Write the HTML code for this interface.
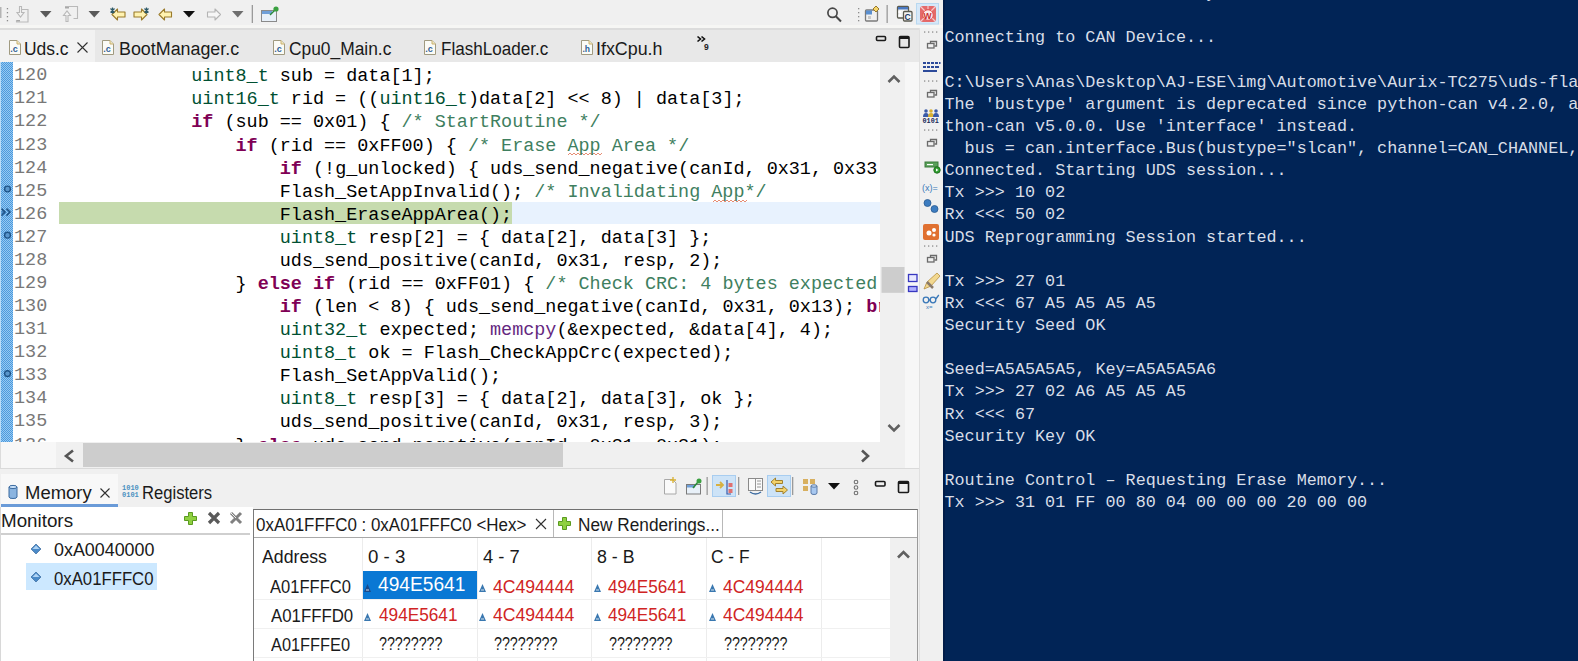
<!DOCTYPE html>
<html><head><meta charset="utf-8">
<style>
*{margin:0;padding:0;box-sizing:border-box}
html,body{width:1578px;height:661px;overflow:hidden;background:#f0f0f0;font-family:"Liberation Sans",sans-serif}
.a{position:absolute}
#toolbar{left:0;top:0;width:943px;height:28px;background:#f0f0f0}
#edtabs{left:0;top:28px;width:919px;height:34px;background:#e8e8e8}
.tab{position:absolute;top:0;height:34px;font-size:18px;color:#1e1e1e;white-space:nowrap}
.tab span{position:absolute;top:8px}
#editor{left:0;top:62px;width:881px;height:380px;background:#fff;overflow:hidden}
#ruler{left:0;top:62px;width:13px;height:380px;background-color:#4a9ade;background-image:conic-gradient(#98c8f0 25%,transparent 0 50%,#98c8f0 0 75%,transparent 0);background-size:2px 2px}
.code{position:absolute;left:58.5px;font-family:"Liberation Mono",monospace;font-size:18.46px;white-space:pre;color:#000;line-height:23.08px}
.ln{position:absolute;left:14px;font-family:"Liberation Mono",monospace;font-size:18.46px;white-space:pre;color:#787878;line-height:23.08px}
i{font-style:normal}
.k{color:#7f0055;font-weight:bold}
.t{color:#005032}
.c{color:#3f7f5f}
.f{color:#642880}
#vscroll{left:881px;top:62px;width:24px;height:380px;background:#f0f0f0}
#overview{left:905px;top:62px;width:14px;height:406px;background:#f7f7f7}
#hscroll{left:0;top:442px;width:905px;height:26px;background:#f0f0f0}
#trim{left:919px;top:28px;width:24px;height:633px;background:#f0f0f0}
#term{left:943px;top:0;width:635px;height:661px;background:#012456;overflow:hidden}
.tl{position:absolute;left:1.5px;font-family:"Liberation Mono",monospace;font-size:16.78px;white-space:pre;color:#d8dee8;line-height:22.13px}
#memtabs{left:0;top:473px;width:919px;height:34px;background:#f0f0f0}
#monitors{left:0;top:507px;width:253px;height:154px;background:#fff}
#rend{left:253px;top:507px;width:666px;height:154px;background:#f0f0f0}
.ui{font-size:18px;color:#1e1e1e;white-space:nowrap}
.u{position:absolute;font-family:"Liberation Sans",sans-serif;line-height:1;white-space:pre;transform-origin:0 0}
</style></head><body>
<div id="toolbar" class="a"></div>
<svg class="a" style="left:0;top:0" width="943" height="28" viewBox="0 0 943 28">
<rect x="0" y="7" width="1.5" height="11" fill="#b4b4b4"/>
<g fill="#8c8c8c"><rect x="6.8" y="8" width="1.3" height="1.3"/><rect x="6.8" y="12" width="1.3" height="1.3"/><rect x="6.8" y="16" width="1.3" height="1.3"/><rect x="6.8" y="20" width="1.3" height="1.3"/></g>
<g fill="none" stroke="#b9b9b9" stroke-width="1.1">
 <path d="M21.5 9.5h6.5v12.5h-11.5v-2"/><path d="M19.5 6.5h2v6h2.5l-3.5 4.5-3.5-4.5h2.5z" fill="#f4f4f4"/>
 <rect x="17" y="20" width="3" height="1.5" fill="#a8a8a8" stroke="none"/>
 <path d="M65 6.5h12.5v12h-4"/><path d="M68 21.5h-2v-6h-2.5l3.5-4.5 3.5 4.5h-2.5v6z" fill="#f4f4f4"/>
 <rect x="65" y="7" width="4" height="1.5" fill="#a8a8a8" stroke="none"/>
</g>
<path d="M40 11h11.5l-5.75 6.5z" fill="#5a5a5a"/>
<path d="M88.5 11h11.5l-5.75 6.5z" fill="#5a5a5a"/>
<g stroke="#9a7a2a" stroke-width="1.1" fill="#fff2b0" stroke-linejoin="round">
 <path d="M112 14.5l5.5-5.5v3h7.5v5h-7.5v3z"/>
 <path d="M147 14.5l-5.5-5.5v3h-7.5v5h7.5v3z"/>
 <path d="M159 14.5l5.5-5.5v3h7v5h-7v3z"/>
 <path d="M220.5 14.5l-5.5-5.5v3h-7.5v5h7.5v3z" stroke="#b4b4b4" fill="#f6f6f6"/>
</g>
<g stroke="#2e5a68" stroke-width="1.2"><path d="M110.5 8.5l4 4M114.5 8.5l-4 4M112.5 7.5v6"/><path d="M144.5 8.5l4 4M148.5 8.5l-4 4M146.5 7.5v6"/></g>
<path d="M183 11h12l-6 6.5z" fill="#101010"/>
<path d="M232 11h11.5l-5.75 6.5z" fill="#6e6e6e"/>
<rect x="251.7" y="5" width="1.3" height="18" fill="#9a9a9a"/>
<rect x="261.5" y="10.5" width="15" height="11" fill="#e8f0f8" stroke="#8a8a8a"/>
<rect x="262" y="11" width="10" height="3" fill="#6f9fd8"/>
<path d="M270 15l5-5" stroke="#2a8a3a" stroke-width="1.5"/><circle cx="276" cy="9" r="2.6" fill="#3aa040"/>
<circle cx="832.5" cy="12.8" r="4.6" fill="none" stroke="#474747" stroke-width="1.7"/><path d="M835.8 16.2l5.2 5.3" stroke="#474747" stroke-width="2"/>
<g fill="#8c8c8c"><rect x="858" y="8" width="1.3" height="1.3"/><rect x="858" y="12" width="1.3" height="1.3"/><rect x="858" y="16" width="1.3" height="1.3"/><rect x="858" y="20" width="1.3" height="1.3"/></g>
<rect x="865.5" y="10" width="12" height="11" rx="1" fill="#f0f0f0" stroke="#7a7a7a" stroke-width="1.3"/>
<rect x="866" y="10.5" width="6" height="4" fill="#5a8fd0"/><rect x="868" y="16" width="3" height="3" fill="#c8c8c8"/>
<path d="M876 6l3 3-3 3-3-3z" fill="#f5d56a" stroke="#9a7a2a"/>
<rect x="886.5" y="5" width="1.3" height="18" fill="#9a9a9a"/>
<rect x="897.5" y="6.5" width="11" height="11.5" rx="1" fill="#f4f4f4" stroke="#5a5a50" stroke-width="1.3"/>
<rect x="898" y="7" width="10" height="2.5" fill="#4a78c0"/><rect x="898.5" y="11" width="2.5" height="2" fill="#fff"/><rect x="898.5" y="14.5" width="2.5" height="2" fill="#fff"/>
<rect x="903.5" y="11.5" width="8.5" height="9.5" rx="1" fill="#f4f4f4" stroke="#5a5a50" stroke-width="1.3"/>
<text x="904.6" y="19.6" font-family="Liberation Sans" font-weight="bold" font-size="8.5" fill="#203a68">C</text>
<rect x="916.5" y="3.5" width="22" height="20.5" fill="#d6e8f8" stroke="#b8d8f0"/>
<rect x="920" y="6" width="16" height="16" rx="3" fill="#e46a6a"/>
<path d="M921 7l4 4M935 7l-4 4M921 21l4-4M935 21l-4-4M928 6v3" stroke="#f8c8c8" stroke-width="1.2"/>
<circle cx="928" cy="15" r="5.2" fill="#fbeaea" stroke="#e04848" stroke-width="0.8"/>
<text x="923.6" y="18.6" font-family="Liberation Sans" font-weight="bold" font-size="8.5" fill="#c83030">W</text>
</svg>
<div id="edtabs" class="a"></div>
<div class="a" style="left:0;top:25px;width:943px;height:3px;background:#f6f6f4"></div>
<div class="a" style="left:0;top:28px;width:919px;height:2px;background:#dcdcdc"></div>
<div class="a" style="left:0;top:30px;width:95px;height:32px;background:#f2f2f2"></div>
<svg class="a" style="left:9px;top:39.5px" width="12" height="15" viewBox="0 0 12 15"><path d="M0.5 0.5h7.5l3.5 3.5v10.5h-11z" fill="#fbfbf6" stroke="#a09a80"/><path d="M8 0.5v3.5h3.5" fill="#f0e8c0" stroke="#c8b070"/><text x="1.2" y="12" font-family="Liberation Sans" font-weight="bold" font-size="9" fill="#2f5f98">.c</text></svg><svg class="a" style="left:77px;top:42px" width="11" height="11" viewBox="0 0 11 11"><path d="M0.5 0.5l10 10M10.5 0.5l-10 10" stroke="#303030" stroke-width="1.1"/></svg>
<svg class="a" style="left:102px;top:39.5px" width="12" height="15" viewBox="0 0 12 15"><path d="M0.5 0.5h7.5l3.5 3.5v10.5h-11z" fill="#fbfbf6" stroke="#a09a80"/><path d="M8 0.5v3.5h3.5" fill="#f0e8c0" stroke="#c8b070"/><text x="1.2" y="12" font-family="Liberation Sans" font-weight="bold" font-size="9" fill="#2f5f98">.c</text></svg><svg class="a" style="left:273px;top:39.5px" width="12" height="15" viewBox="0 0 12 15"><path d="M0.5 0.5h7.5l3.5 3.5v10.5h-11z" fill="#fbfbf6" stroke="#a09a80"/><path d="M8 0.5v3.5h3.5" fill="#f0e8c0" stroke="#c8b070"/><text x="1.2" y="12" font-family="Liberation Sans" font-weight="bold" font-size="9" fill="#2f5f98">.c</text></svg><svg class="a" style="left:424px;top:39.5px" width="12" height="15" viewBox="0 0 12 15"><path d="M0.5 0.5h7.5l3.5 3.5v10.5h-11z" fill="#fbfbf6" stroke="#a09a80"/><path d="M8 0.5v3.5h3.5" fill="#f0e8c0" stroke="#c8b070"/><text x="1.2" y="12" font-family="Liberation Sans" font-weight="bold" font-size="9" fill="#2f5f98">.c</text></svg><svg class="a" style="left:581px;top:39.5px" width="12" height="15" viewBox="0 0 12 15"><path d="M0.5 0.5h7.5l3.5 3.5v10.5h-11z" fill="#fbfbf6" stroke="#a09a80"/><path d="M8 0.5v3.5h3.5" fill="#f0e8c0" stroke="#c8b070"/><text x="1.5" y="12" font-family="Liberation Sans" font-weight="bold" font-size="8.5" fill="#2f5f98">.h</text></svg><svg class="a" style="left:695px;top:34px" width="18" height="18" viewBox="0 0 18 18"><path d="M2.5 2.5l3 2.5-3 2.5M6.5 2.5l3 2.5-3 2.5" fill="none" stroke="#111" stroke-width="1.6"/><text x="9" y="15.8" font-family="Liberation Sans" font-weight="bold" font-size="8.5" fill="#222">9</text></svg>
<svg class="a" style="left:875px;top:35px" width="36" height="14" viewBox="0 0 36 14"><rect x="1.5" y="1.5" width="9" height="4" rx="1" fill="none" stroke="#1a1a1a" stroke-width="1.6"/><rect x="24.5" y="1.5" width="9.5" height="11" rx="1" fill="none" stroke="#1a1a1a" stroke-width="1.6"/><rect x="24.5" y="1.5" width="9.5" height="2.5" fill="#1a1a1a"/></svg>
<div id="editor" class="a" style="width:880px">
<div class="a" style="left:58.5px;top:139.6px;width:822px;height:22.8px;background:#e8f2fe"></div>
<div class="a" style="left:58.5px;top:139.6px;width:453.5px;height:22.8px;background:#c6dbae"></div>
<div class="ln" style="top:2.3px">120
121
122
123
124
125
126
127
128
129
130
131
132
133
134
135
136</div>
<svg class="a" style="left:0;top:-62px" width="881" height="442" viewBox="0 0 881 442"><g fill="none" stroke="#e07050" stroke-width="0.8"><path d="M568 155L570 153L572 155L574 153L576 155L578 153L580 155L582 153L584 155L586 153L588 155L590 153L592 155L594 153L596 155L598 153L600 155L602 153"/><path d="M713 202L715 200L717 202L719 200L721 202L723 200L725 202L727 200L729 202L731 200L733 202L735 200L737 202L739 200L741 202L743 200L745 202L747 200"/></g></svg>
<div class="code" style="top:3.3px">            <i class="t">uint8_t</i> sub = data[1];
            <i class="t">uint16_t</i> rid = ((<i class="t">uint16_t</i>)data[2] &lt;&lt; 8) | data[3];
            <i class="k">if</i> (sub == 0x01) { <i class="c">/* StartRoutine */</i>
                <i class="k">if</i> (rid == 0xFF00) { <i class="c">/* Erase App Area */</i>
                    <i class="k">if</i> (!g_unlocked) { uds_send_negative(canId, 0x31, 0x33); <i class="k">return</i>;
                    Flash_SetAppInvalid(); <i class="c">/* Invalidating App*/</i>
                    Flash_EraseAppArea();
                    <i class="t">uint8_t</i> resp[2] = { data[2], data[3] };
                    uds_send_positive(canId, 0x31, resp, 2);
                } <i class="k">else if</i> (rid == 0xFF01) { <i class="c">/* Check CRC: 4 bytes expected */</i>
                    <i class="k">if</i> (len &lt; 8) { uds_send_negative(canId, 0x31, 0x13); <i class="k">break</i>;
                    <i class="t">uint32_t</i> expected; <i class="f">memcpy</i>(&amp;expected, &amp;data[4], 4);
                    <i class="t">uint8_t</i> ok = Flash_CheckAppCrc(expected);
                    Flash_SetAppValid();
                    <i class="t">uint8_t</i> resp[3] = { data[2], data[3], ok };
                    uds_send_positive(canId, 0x31, resp, 3);
                } <i class="k">else</i> uds_send_negative(canId, 0x31, 0x31);
</div>
</div>
<div id="ruler" class="a"></div>
<svg class="a" style="left:0;top:62px" width="14" height="380" viewBox="0 0 14 380"><rect x="0" y="0" width="1" height="380" fill="#b8dcf8"/><circle cx="7.5" cy="127.0" r="2.9" fill="#5a96cc" stroke="#1f5488" stroke-width="1.4"/><circle cx="7.5" cy="173.2" r="2.9" fill="#5a96cc" stroke="#1f5488" stroke-width="1.4"/><circle cx="7.5" cy="311.6" r="2.9" fill="#5a96cc" stroke="#1f5488" stroke-width="1.4"/><circle cx="3.5" cy="150.1" r="2.2" fill="#4a86c0"/><path d="M1.5 146.6l3.5 3.5-3.5 3.5M6.5 146.6l3.5 3.5-3.5 3.5" fill="none" stroke="#1f5488" stroke-width="1.5"/></svg>
<div id="vscroll" class="a"></div>

<div id="overview" class="a"></div>
<svg class="a" style="left:881px;top:62px" width="38" height="407" viewBox="0 0 38 407">
<path d="M7.5 20l5.5-5.5 5.5 5.5" fill="none" stroke="#606060" stroke-width="2.6"/>
<path d="M7.5 363l5.5 5.5 5.5-5.5" fill="none" stroke="#606060" stroke-width="2.6"/>
<rect x="0.5" y="205" width="23" height="25.8" fill="#cdcdcd"/>
<rect x="27.5" y="212.5" width="8.5" height="7" fill="#e8e8ff" stroke="#3838c0" stroke-width="1.3"/>
<rect x="27.5" y="224.5" width="8.5" height="5" fill="#b0b0ff" stroke="#3838c0" stroke-width="1.3"/>
</svg>
<div id="hscroll" class="a"></div>
<div class="a" style="left:0;top:442px;width:56px;height:26px;background:#f7f7f7;border-left:1px solid #dcdcdc"></div>
<div class="a" style="left:83px;top:443px;width:480px;height:24px;background:#cdcdcd"></div>
<svg class="a" style="left:0;top:442px" width="905" height="27" viewBox="0 0 905 27"><path d="M73 8.5l-7 5.5 7 5.5" fill="none" stroke="#555" stroke-width="2.6"/><path d="M862 8.5l6 5.5-6 5.5" fill="none" stroke="#555" stroke-width="2.6"/></svg>
<div class="a" style="left:0;top:468px;width:919px;height:1px;background:#dadada"></div>
<div class="a" style="left:0;top:473px;width:919px;height:1px;background:#dadada"></div>
<div id="trim" class="a"></div>
<svg class="a" style="left:919px;top:0" width="24" height="661" viewBox="0 0 24 661"><rect x="0" y="28" width="1" height="633" fill="#e0e0e0"/><rect x="5" y="31.4" width="1.3" height="1.3" fill="#8c8c8c"/><rect x="9" y="31.4" width="1.3" height="1.3" fill="#8c8c8c"/><rect x="13" y="31.4" width="1.3" height="1.3" fill="#8c8c8c"/><rect x="17" y="31.4" width="1.3" height="1.3" fill="#8c8c8c"/><g fill="none" stroke="#6a6a6a" stroke-width="1.3"><path d="M11.5 43.5v-2h6v4.5h-2"/><rect x="8.5" y="43.5" width="6.5" height="4.5"/></g><g fill="#2c4a9a"><rect x="4" y="62" width="3" height="2"/><rect x="8" y="62" width="3" height="2"/><rect x="12" y="62" width="3" height="2"/><rect x="16" y="62" width="3" height="2"/><rect x="20" y="62" width="1.5" height="2"/><rect x="4" y="66" width="3" height="2"/><rect x="8" y="66" width="3" height="2"/><rect x="12" y="66" width="3" height="2"/><rect x="16" y="66" width="4" height="2"/><rect x="4" y="70" width="14" height="2"/></g><rect x="5" y="80.4" width="1.3" height="1.3" fill="#8c8c8c"/><rect x="9" y="80.4" width="1.3" height="1.3" fill="#8c8c8c"/><rect x="13" y="80.4" width="1.3" height="1.3" fill="#8c8c8c"/><rect x="17" y="80.4" width="1.3" height="1.3" fill="#8c8c8c"/><g fill="none" stroke="#6a6a6a" stroke-width="1.3"><path d="M11.5 92.5v-2h6v4.5h-2"/><rect x="8.5" y="92.5" width="6.5" height="4.5"/></g><g><circle cx="7" cy="111" r="1.8" fill="#3a5aa8"/><path d="M4 117q0-4 3-4q3 0 3 4z" fill="#3a5aa8"/><circle cx="12" cy="111" r="1.8" fill="#d8b030"/><path d="M9 117q0-4 3-4q3 0 3 4z" fill="#d8b030"/><circle cx="17" cy="111" r="1.8" fill="#3a5aa8"/><path d="M14 117q0-4 3-4q3 0 3 4z" fill="#3a5aa8"/></g><text x="3.5" y="123" font-family="Liberation Mono" font-weight="bold" font-size="6.8" fill="#1a2a5a">0101</text><rect x="5" y="129.4" width="1.3" height="1.3" fill="#8c8c8c"/><rect x="9" y="129.4" width="1.3" height="1.3" fill="#8c8c8c"/><rect x="13" y="129.4" width="1.3" height="1.3" fill="#8c8c8c"/><rect x="17" y="129.4" width="1.3" height="1.3" fill="#8c8c8c"/><g fill="none" stroke="#6a6a6a" stroke-width="1.3"><path d="M11.5 141.5v-2h6v4.5h-2"/><rect x="8.5" y="141.5" width="6.5" height="4.5"/></g><rect x="6" y="162" width="13" height="5" fill="#5aa05a"/><rect x="6" y="162" width="13" height="5" fill="none" stroke="#3a7a3a"/><rect x="8" y="164" width="6" height="1.2" fill="#fff"/><circle cx="18" cy="170" r="3.2" fill="#30a030" stroke="#207020"/><path d="M17 168.5l2.5 1.5-2.5 1.5z" fill="#fff"/><text x="3" y="190.5" font-family="Liberation Sans" font-size="9" fill="#3a78b8">(x)=</text><circle cx="8.5" cy="203" r="3.5" fill="#3c7cc0" stroke="#2a5a90" stroke-width="0.8"/><circle cx="15.5" cy="209" r="3.5" fill="#3c7cc0" stroke="#2a5a90" stroke-width="0.8"/><rect x="4" y="224" width="16" height="16" rx="2" fill="#e07030"/><circle cx="10" cy="233" r="2.5" fill="#fff"/><circle cx="15" cy="230" r="2" fill="#fff"/><circle cx="15" cy="235" r="1.6" fill="#fff"/><rect x="5" y="245.4" width="1.3" height="1.3" fill="#8c8c8c"/><rect x="9" y="245.4" width="1.3" height="1.3" fill="#8c8c8c"/><rect x="13" y="245.4" width="1.3" height="1.3" fill="#8c8c8c"/><rect x="17" y="245.4" width="1.3" height="1.3" fill="#8c8c8c"/><g fill="none" stroke="#6a6a6a" stroke-width="1.3"><path d="M11.5 257.5v-2h6v4.5h-2"/><rect x="8.5" y="257.5" width="6.5" height="4.5"/></g><path d="M5 289l3-7 10-9 3 3-9 10z" fill="#f2d890" stroke="#b89040" stroke-width="0.8"/><path d="M8 282l6 6" stroke="#8a7a6a" stroke-width="2.5"/><g fill="none" stroke="#3a78b8" stroke-width="1.3"><circle cx="7" cy="300" r="2.8"/><circle cx="14" cy="300" r="2.8"/><path d="M9.8 300h1.4M16.8 299l3-4"/></g><text x="7" y="309" font-family="Liberation Sans" font-size="6" fill="#3a78b8">x=</text></svg>
<div id="memtabs" class="a"></div>
<div class="a" style="left:1px;top:474px;width:117px;height:33px;background:#f8f8f8"></div>
<div class="a" style="left:1px;top:504px;width:117px;height:3px;background:#6a9bd8"></div>
<svg class="a" style="left:0;top:470px" width="919" height="30" viewBox="0 0 919 30">
<path d="M9 17v10q0 1.5 4 1.5t4-1.5v-10" fill="#8ab4e0" stroke="#3a6aa0" stroke-width="1"/><ellipse cx="13" cy="17" rx="4" ry="1.6" fill="#c8e0f8" stroke="#3a6aa0" stroke-width="1"/>
<path d="M100.5 18.5l9 9M109.5 18.5l-9 9" stroke="#303030" stroke-width="1.1"/>
<text x="122" y="20" font-family="Liberation Mono" font-weight="bold" font-size="7" fill="#4a90c0">1010</text><text x="122" y="27" font-family="Liberation Mono" font-weight="bold" font-size="7" fill="#4a90c0">0101</text>
<path d="M664.5 9.5h8l3.5 3.5v11h-11.5z" fill="#fafafa" stroke="#a8a8a8"/><path d="M673 7v6M670 10h6" stroke="#d8b030" stroke-width="1.3"/>
<rect x="686.5" y="14.5" width="14" height="9.5" fill="#e8f0f8" stroke="#7a7a7a"/><rect x="687" y="15" width="8" height="2.5" fill="#6f9fd8"/><path d="M693 18l5-6" stroke="#2a8a3a" stroke-width="1.5"/><circle cx="699" cy="11" r="2.5" fill="#3aa040"/>
<rect x="706.5" y="7" width="1.3" height="18" fill="#9a9a9a"/>
<rect x="712.5" y="5.5" width="23" height="21" fill="#cde3f7" stroke="#a8cdf0"/>
<path d="M716 15h7M720 12l3 3-3 3" stroke="#d8b040" stroke-width="1.8" fill="none"/><path d="M727 10v14h4" stroke="#3a5aa8" stroke-width="1.2" fill="none"/><rect x="728.5" y="13" width="4" height="4" fill="#e07070"/><rect x="728.5" y="19" width="4" height="4" fill="#e07070"/>
<rect x="738" y="7" width="1.3" height="18" fill="#9a9a9a"/>
<rect x="748.5" y="8.5" width="14" height="12" fill="#fafafa" stroke="#8a8a8a"/><path d="M755.5 8.5v12M757 11h4M757 14h4M757 17h4" stroke="#8a8a8a" stroke-width="0.9"/><path d="M750 22q5.5 4 11 0" fill="none" stroke="#3a6aa0" stroke-width="1.5"/>
<rect x="767.5" y="5.5" width="23" height="21" fill="#cde3f7" stroke="#a8cdf0"/>
<path d="M771 12l4.5-4v2.5h7v3h-7v2.5z" fill="#f3d26a" stroke="#a08030"/><path d="M787.5 20l-4.5-4v2.5h-7v3h7v2.5z" fill="#f3d26a" stroke="#a08030"/>
<rect x="792" y="7" width="1.3" height="18" fill="#9a9a9a"/>
<rect x="803" y="9" width="5" height="5" fill="#d8b060"/><rect x="810" y="9" width="5" height="5" fill="#d8b060"/><rect x="803" y="16" width="5" height="5" fill="#d8b060"/><path d="M811 16v7q0 1.5 3 1.5t3-1.5v-7" fill="#a8c8f0" stroke="#5a7aa8"/><ellipse cx="814" cy="16" rx="3" ry="1.2" fill="#d0e4fa" stroke="#5a7aa8"/>
<path d="M828 13h12l-6 6.5z" fill="#101010"/>
<g fill="none" stroke="#707070" stroke-width="1.1"><circle cx="856" cy="12" r="1.8"/><circle cx="856" cy="17.5" r="1.8"/><circle cx="856" cy="23" r="1.8"/></g>
<rect x="875.5" y="11.5" width="9.5" height="4.5" rx="1" fill="none" stroke="#1a1a1a" stroke-width="1.6"/>
<rect x="898.5" y="11.5" width="10" height="11" rx="1" fill="none" stroke="#1a1a1a" stroke-width="1.6"/><rect x="898.5" y="11.5" width="10" height="2.5" fill="#1a1a1a"/>
</svg>

<div id="monitors" class="a"></div>
<div class="a" style="left:0;top:533px;width:250px;height:2px;background:#cfcfcf"></div>
<svg class="a" style="left:180px;top:508px" width="70" height="22" viewBox="0 0 70 22">
<path d="M8.5 4.5h4v4h4v4h-4v4h-4v-4h-4v-4h4z" fill="#8fd040" stroke="#5a9a20"/>
<path d="M29 5l10 10M39 5l-10 10" stroke="#5a5a5a" stroke-width="3.2"/>
<path d="M51 5l10 10M61 5l-10 10" stroke="#808080" stroke-width="3"/><path d="M50 4l6 6" stroke="#f0f0f0" stroke-width="1"/>
</svg>
<svg class="a" style="left:30px;top:543px" width="12" height="40" viewBox="0 0 12 40"><path d="M6 1l5 5-5 5-5-5z" fill="#4a8ac8" stroke="#2a5a90" stroke-width="0.6"/><path d="M6 29l5 5-5 5-5-5z" fill="#4a8ac8" stroke="#2a5a90" stroke-width="0.6"/><path d="M2.5 6l3.5-3.5 3.5 3.5z" fill="#b0d4f4"/><path d="M2.5 34l3.5-3.5 3.5 3.5z" fill="#b0d4f4"/></svg>
<div class="a" style="left:26px;top:563px;width:131px;height:27px;background:#cce8ff"></div>
<svg class="a" style="left:30px;top:543px" width="12" height="40" viewBox="0 0 12 40"><path d="M6 29l5 5-5 5-5-5z" fill="#4a8ac8" stroke="#2a5a90" stroke-width="0.6"/><path d="M2.5 34l3.5-3.5 3.5 3.5z" fill="#b0d4f4"/></svg>

<div id="rend" class="a"></div>
<div class="a" style="left:253px;top:508.5px;width:665px;height:152.5px;background:#fff;border-top:1.5px solid #707070;border-left:1.5px solid #7a7a7a;border-right:1px solid #9a9a9a"></div>
<div class="a" style="left:0;top:507px;width:1px;height:154px;background:#d8d8d8"></div>
<div class="a" style="left:254px;top:537px;width:663px;height:1px;background:#a8a8a8"></div>
<div class="a" style="left:553px;top:510px;width:1px;height:27px;background:#b8b8b8"></div>
<div class="a" style="left:722px;top:510px;width:1px;height:27px;background:#b8b8b8"></div>
<svg class="a" style="left:535px;top:518px" width="12" height="12" viewBox="0 0 12 12"><path d="M1 1l10 10M11 1l-10 10" stroke="#303030" stroke-width="1.1"/></svg>
<svg class="a" style="left:557px;top:516px" width="16" height="16" viewBox="0 0 16 16"><path d="M5.5 1.5h4v4h4v4h-4v4h-4v-4h-4v-4h4z" fill="#8fd040" stroke="#5a9a20"/></svg>
<div class="a" style="left:890px;top:538px;width:27px;height:123px;background:#f0f0f0"></div>
<svg class="a" style="left:890px;top:538px" width="27" height="30" viewBox="0 0 27 30"><path d="M8 19.5l5.5-5.5 5.5 5.5" fill="none" stroke="#606060" stroke-width="2.6"/></svg>
<div class="a" style="left:362px;top:538px;width:1px;height:123px;background:#ececec"></div>
<div class="a" style="left:477px;top:538px;width:1px;height:123px;background:#ececec"></div>
<div class="a" style="left:591px;top:538px;width:1px;height:123px;background:#ececec"></div>
<div class="a" style="left:706px;top:538px;width:1px;height:123px;background:#ececec"></div>
<div class="a" style="left:821px;top:538px;width:1px;height:123px;background:#ececec"></div>
<div class="a" style="left:254px;top:599px;width:636px;height:1px;background:#f0f0f0"></div>
<div class="a" style="left:254px;top:628px;width:636px;height:1px;background:#f0f0f0"></div>
<div class="a" style="left:254px;top:657px;width:636px;height:1px;background:#f0f0f0"></div>
<div class="a" style="left:363px;top:571px;width:114px;height:28px;background:#0a78d4"></div>
<svg class="a" style="left:254px;top:570px" width="640" height="60" viewBox="0 0 640 60"><path d="M110 22l3.5-8 3.5 8z" fill="#1a4a8a"/><path d="M112 20h3" stroke="#fff" stroke-width="0.8"/><path d="M225 22l3.5-8 3.5 8z" fill="#3a78b0"/><path d="M227 20h3" stroke="#fff" stroke-width="0.8"/><path d="M340 22l3.5-8 3.5 8z" fill="#3a78b0"/><path d="M342 20h3" stroke="#fff" stroke-width="0.8"/><path d="M455 22l3.5-8 3.5 8z" fill="#3a78b0"/><path d="M457 20h3" stroke="#fff" stroke-width="0.8"/><path d="M110 51l3.5-8 3.5 8z" fill="#3a78b0"/><path d="M112 49h3" stroke="#fff" stroke-width="0.8"/><path d="M225 51l3.5-8 3.5 8z" fill="#3a78b0"/><path d="M227 49h3" stroke="#fff" stroke-width="0.8"/><path d="M340 51l3.5-8 3.5 8z" fill="#3a78b0"/><path d="M342 49h3" stroke="#fff" stroke-width="0.8"/><path d="M455 51l3.5-8 3.5 8z" fill="#3a78b0"/><path d="M457 49h3" stroke="#fff" stroke-width="0.8"/></svg>

<div id="term" class="a"><div class="a" style="left:0;top:0;width:2px;height:661px;background:#011c48"></div><div class="tl" style="top:-16.8px">                          y

Connecting to CAN Device...

C:\Users\Anas\Desktop\AJ-ESE\img\Automotive\Aurix-TC275\uds-flasher\uds_flash.py:12: DeprecationWarning:
The &#x27;bustype&#x27; argument is deprecated since python-can v4.2.0, and will be removed in py
thon-can v5.0.0. Use &#x27;interface&#x27; instead.
  bus = can.interface.Bus(bustype=&quot;slcan&quot;, channel=CAN_CHANNEL, bitrate=500000)
Connected. Starting UDS session...
Tx &gt;&gt;&gt; 10 02
Rx &lt;&lt;&lt; 50 02
UDS Reprogramming Session started...

Tx &gt;&gt;&gt; 27 01
Rx &lt;&lt;&lt; 67 A5 A5 A5 A5
Security Seed OK

Seed=A5A5A5A5, Key=A5A5A5A6
Tx &gt;&gt;&gt; 27 02 A6 A5 A5 A5
Rx &lt;&lt;&lt; 67
Security Key OK

Routine Control – Requesting Erase Memory...
Tx &gt;&gt;&gt; 31 01 FF 00 80 04 00 00 00 20 00 00</div></div>
<div class="u" style="left:24.47px;top:39.60px;font-size:18.8px;color:#1a1a1a;transform:scaleX(0.9283)">Uds.c</div>
<div class="u" style="left:118.85px;top:39.90px;font-size:18.8px;color:#1a1a1a;transform:scaleX(0.9512)">BootManager.c</div>
<div class="u" style="left:289.28px;top:39.80px;font-size:18.8px;color:#1a1a1a;transform:scaleX(0.9248)">Cpu0_Main.c</div>
<div class="u" style="left:440.69px;top:39.80px;font-size:18.8px;color:#1a1a1a;transform:scaleX(0.9086)">FlashLoader.c</div>
<div class="u" style="left:596.40px;top:39.80px;font-size:18.8px;color:#1a1a1a;transform:scaleX(0.9507)">IfxCpu.h</div>
<div class="u" style="left:24.72px;top:483.90px;font-size:18.8px;color:#1a1a1a;transform:scaleX(0.9836)">Memory</div>
<div class="u" style="left:142.12px;top:483.90px;font-size:18.8px;color:#1a1a1a;transform:scaleX(0.8846)">Registers</div>
<div class="u" style="left:1.00px;top:512.00px;font-size:18.8px;color:#1a1a1a;transform:scaleX(1.0000)">Monitors</div>
<div class="u" style="left:54.05px;top:541.00px;font-size:18.8px;color:#1a1a1a;transform:scaleX(0.9519)">0xA0040000</div>
<div class="u" style="left:54.11px;top:569.50px;font-size:18.8px;color:#1a1a1a;transform:scaleX(0.8909)">0xA01FFFC0</div>
<div class="u" style="left:256.10px;top:515.50px;font-size:18.8px;color:#1a1a1a;transform:scaleX(0.9027)">0xA01FFFC0 : 0xA01FFFC0 &lt;Hex&gt;</div>
<div class="u" style="left:577.58px;top:515.50px;font-size:18.8px;color:#1a1a1a;transform:scaleX(0.9178)">New Renderings...</div>
<div class="u" style="left:262.30px;top:547.90px;font-size:18.8px;color:#1a1a1a;transform:scaleX(0.9426)">Address</div>
<div class="u" style="left:367.51px;top:547.90px;font-size:18.8px;color:#1a1a1a;transform:scaleX(0.9944)">0 - 3</div>
<div class="u" style="left:482.80px;top:547.90px;font-size:18.8px;color:#1a1a1a;transform:scaleX(0.9784)">4 - 7</div>
<div class="u" style="left:597.05px;top:547.90px;font-size:18.8px;color:#1a1a1a;transform:scaleX(0.9474)">8 - B</div>
<div class="u" style="left:711.08px;top:547.90px;font-size:18.8px;color:#1a1a1a;transform:scaleX(0.9250)">C - F</div>
<div class="u" style="left:269.80px;top:577.80px;font-size:18.8px;color:#1a1a1a;transform:scaleX(0.8813)">A01FFFC0</div>
<div class="u" style="left:270.60px;top:606.80px;font-size:18.8px;color:#1a1a1a;transform:scaleX(0.8945)">A01FFFD0</div>
<div class="u" style="left:270.60px;top:635.80px;font-size:18.8px;color:#1a1a1a;transform:scaleX(0.8711)">A01FFFE0</div>
<div class="u" style="left:377.70px;top:575.00px;font-size:19.6px;color:#ffffff;transform:scaleX(0.9775)">494E5641</div>
<div class="u" style="left:493.40px;top:577.60px;font-size:18.8px;color:#d02424;transform:scaleX(0.9372)">4C494444</div>
<div class="u" style="left:608.00px;top:577.60px;font-size:18.8px;color:#d02424;transform:scaleX(0.9153)">494E5641</div>
<div class="u" style="left:723.00px;top:577.60px;font-size:18.8px;color:#d02424;transform:scaleX(0.9291)">4C494444</div>
<div class="u" style="left:378.60px;top:606.30px;font-size:18.8px;color:#d02424;transform:scaleX(0.9165)">494E5641</div>
<div class="u" style="left:493.40px;top:606.30px;font-size:18.8px;color:#d02424;transform:scaleX(0.9372)">4C494444</div>
<div class="u" style="left:608.00px;top:606.30px;font-size:18.8px;color:#d02424;transform:scaleX(0.9153)">494E5641</div>
<div class="u" style="left:723.00px;top:606.30px;font-size:18.8px;color:#d02424;transform:scaleX(0.9291)">4C494444</div>
<div class="u" style="left:378.74px;top:634.80px;font-size:18.8px;color:#1a1a1a;transform:scaleX(0.7598)">????????</div>
<div class="u" style="left:493.74px;top:634.80px;font-size:18.8px;color:#1a1a1a;transform:scaleX(0.7598)">????????</div>
<div class="u" style="left:608.74px;top:634.80px;font-size:18.8px;color:#1a1a1a;transform:scaleX(0.7598)">????????</div>
<div class="u" style="left:723.74px;top:634.80px;font-size:18.8px;color:#1a1a1a;transform:scaleX(0.7598)">????????</div>
</body></html>
